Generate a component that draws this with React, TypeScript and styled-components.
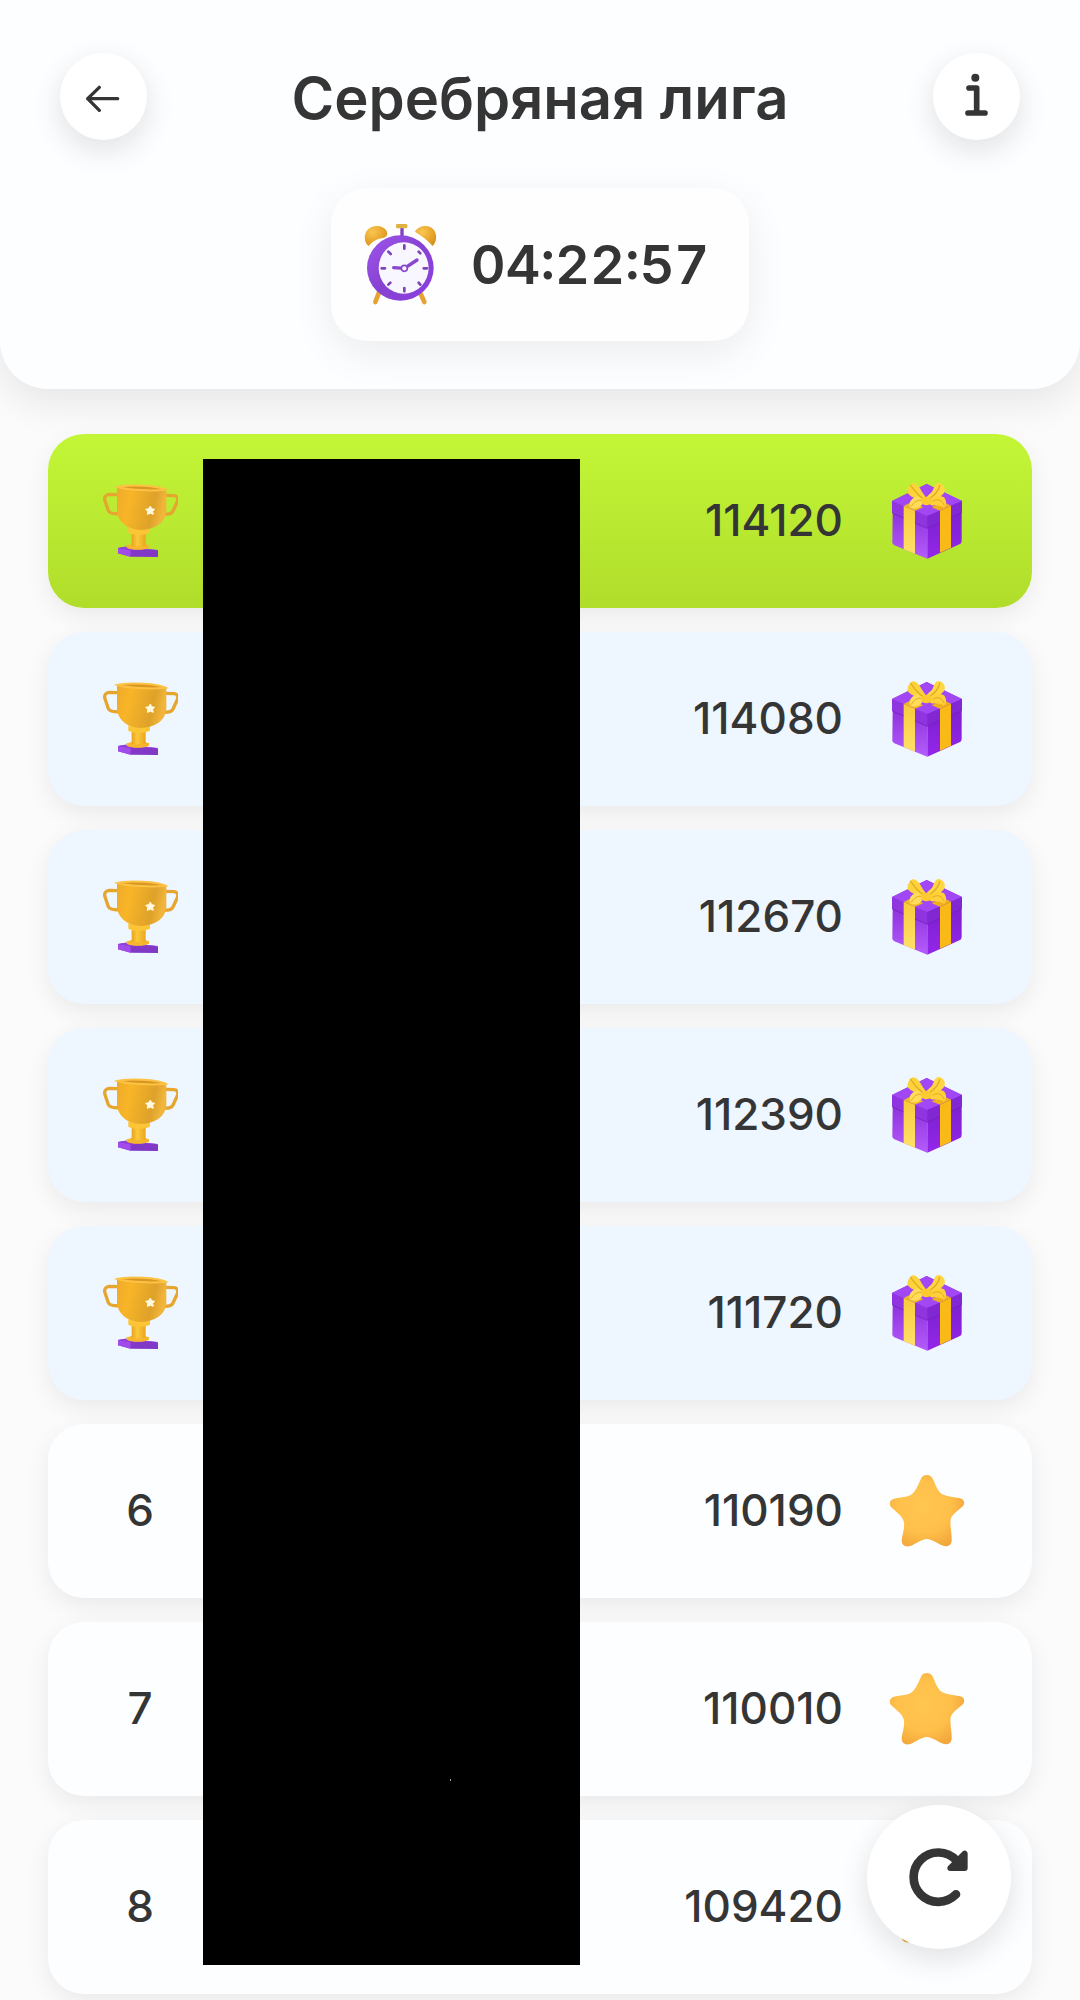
import styled, { createGlobalStyle } from "styled-components";

type Player = {
  place: number;
  score: number;
  current?: boolean;
};

const players: Player[] = [
  { place: 1, score: 114120, current: true },
  { place: 2, score: 114080 },
  { place: 3, score: 112670 },
  { place: 4, score: 112390 },
  { place: 5, score: 111720 },
  { place: 6, score: 110190 },
  { place: 7, score: 110010 },
  { place: 8, score: 109420 },
];

// first five places get a cup and a gift
const PRIZE_PLACES = 5;

const ArrowIcon = () => (
  <svg viewBox="60 68 261 261" aria-hidden="true">
    <path
      d="M178 171L143 205L178 240M143 205H233"
      fill="none"
      stroke="#353535"
      strokeWidth="10"
      strokeLinecap="round"
      strokeLinejoin="round"
    />
  </svg>
);

const InfoIcon = () => (
  <svg viewBox="69 68 261 261" aria-hidden="true">
    <circle cx="196" cy="142" r="12" fill="#353535" />
    <path
      d="M177 173H200V247M174 248H225"
      fill="none"
      stroke="#353535"
      strokeWidth="17"
      strokeLinecap="round"
      strokeLinejoin="round"
    />
  </svg>
);

const RefreshIcon = () => (
  <svg viewBox="621 75 432 432" aria-hidden="true">
    <path
      d="M888 343A74 74 0 1 1 889 241"
      fill="none"
      stroke="#353535"
      strokeWidth="26"
      strokeLinecap="round"
    />
    <path
      d="M914 221V264H871Z"
      fill="#353535"
      stroke="#353535"
      strokeWidth="18"
      strokeLinejoin="round"
    />
  </svg>
);

const ClockIcon = () => (
  <svg width="76" height="88" viewBox="36 66 228 264" aria-hidden="true">
    <defs>
      <linearGradient id="clockBody" x1="0" y1="0" x2="1" y2="1">
        <stop offset="0" stopColor="#9d55ea" />
        <stop offset="0.5" stopColor="#8742d2" />
        <stop offset="1" stopColor="#8b3fe0" />
      </linearGradient>
      <radialGradient id="clockBell" cx="0.35" cy="0.3" r="0.8">
        <stop offset="0" stopColor="#f9c750" />
        <stop offset="0.6" stopColor="#e9a52d" />
        <stop offset="1" stopColor="#d18f1f" />
      </radialGradient>
    </defs>
    <path d="M84 280L73 309M207 280L220 309" stroke="#e8a232" strokeWidth="14" strokeLinecap="round" />
    <path d="M148 84H158V112H148Z" fill="#8340c4" />
    <rect x="135" y="75" width="34" height="13" rx="4" fill="#dfb341" />
    <path d="M53 141C39 131 36 105 52 90C68 76 97 79 107 96C112 108 106 116 92 118C74 121 63 130 53 141Z" fill="url(#clockBell)" />
    <path d="M192 98C203 80 231 75 247 91C260 106 257 130 245 141C233 126 214 112 192 98Z" fill="url(#clockBell)" />
    <ellipse cx="148" cy="207" rx="100" ry="98" fill="url(#clockBody)" />
    <ellipse cx="158" cy="207" rx="75" ry="77" fill="#f8f6fe" />
    <path
      d="M160 139V149M160 267V277M92 208H102M218 208H228M112 158L119 165M203 158L208 163M112 257L118 251M203 251L208 257"
      stroke="#7b45b5"
      strokeWidth="8"
      strokeLinecap="round"
      strokeLinejoin="round"
      fill="none"
    />
    <path d="M160 208L128 206M160 208L198 183" stroke="#8748ce" strokeWidth="10" strokeLinecap="round" />
    <circle cx="160" cy="208" r="9" fill="#f8f6fe" stroke="#8748ce" strokeWidth="5" />
  </svg>
);

const CupIcon = () => (
  <svg width="76" height="80" viewBox="36 30 228 240" role="img" aria-label="Кубок">
    <defs>
      <linearGradient id="cupBowl" x1="0" y1="0" x2="1" y2="0.2">
        <stop offset="0" stopColor="#eda92b" />
        <stop offset="0.3" stopColor="#f8b527" />
        <stop offset="0.8" stopColor="#dea22a" />
        <stop offset="1" stopColor="#f1b53b" />
      </linearGradient>
      <linearGradient id="cupStem" x1="0" y1="0" x2="1" y2="0">
        <stop offset="0" stopColor="#e9a21e" />
        <stop offset="0.4" stopColor="#fbc93c" />
        <stop offset="1" stopColor="#eba51e" />
      </linearGradient>
    </defs>
    <path
      d="M86 74L57 73C46 74 42 83 45 92L55 122C59 131 70 132 86 131M226 76L252 77C262 78 266 86 262 95L248 125C243 133 235 133 222 133"
      fill="none"
      stroke="#e6a52e"
      strokeWidth="10"
      strokeLinecap="round"
    />
    <path d="M84 234L106 230L204 241V261L122 260L84 250Z" fill="#8238c6" />
    <path d="M84 234L122 241V260L84 250Z" fill="#a04bea" />
    <path d="M84 234L106 230L204 240L122 241Z" fill="#9140d8" />
    <ellipse cx="144" cy="229" rx="33" ry="9" fill="#f5b82e" />
    <path d="M125 188H167V228H125Z" fill="url(#cupStem)" />
    <path d="M110 224C126 232 162 232 177 224V233C160 242 126 241 110 233Z" fill="#f5b52c" />
    <path d="M115 172H180V188C160 197 132 197 115 188Z" fill="#fbc536" />
    <path d="M81 51C111 40 212 46 229 61V125C224 160 194 178 153 180C110 178 85 155 81 125Z" fill="url(#cupBowl)" />
    <path d="M82 51C112 42 205 47 227 59C190 64 110 60 82 51Z" fill="#d99722" stroke="#fcc244" strokeWidth="6" />
    <path
      d="M181 108L185 116L194 118L188 124L190 133L181 130L172 133L173 124L167 118L176 116Z"
      fill="#fff9df"
      stroke="#fff9df"
      strokeWidth="3"
      strokeLinejoin="round"
    />
  </svg>
);

const GiftIcon = () => (
  <svg width="76" height="80" viewBox="57 30 228 240" role="img" aria-label="Подарок">
    <defs>
      <linearGradient id="giftLeft" x1="0" y1="0" x2="0" y2="1">
        <stop offset="0" stopColor="#8e32dd" />
        <stop offset="1" stopColor="#b45cfb" />
      </linearGradient>
      <linearGradient id="giftRight" x1="0" y1="0" x2="0" y2="1">
        <stop offset="0" stopColor="#7d20cf" />
        <stop offset="1" stopColor="#9326ea" />
      </linearGradient>
      <linearGradient id="giftRibbon" x1="0" y1="0" x2="0" y2="1">
        <stop offset="0" stopColor="#f9cb3a" />
        <stop offset="1" stopColor="#ffe06a" />
      </linearGradient>
    </defs>
    <path d="M68 126L172 168V266L73 226Q67 223 67 217Z" fill="url(#giftLeft)" />
    <path d="M172 168L275 124V212Q275 219 270 222L172 266Z" fill="url(#giftRight)" />
    <path d="M66 93L170 42L276 93V127L172 174L66 128Z" fill="#8f34df" />
    <path d="M66 93L170 42L276 93L172 138Z" fill="#a247f4" />
    <path d="M172 138L276 93V127L172 174Z" fill="#8227d4" />
    <path d="M67 129L172 175L275 128" fill="none" stroke="#6c1bb6" strokeWidth="2" />
    <path d="M101 108L135 122V251L101 238Z" fill="url(#giftRibbon)" />
    <path d="M210 122L243 107V233L210 248Z" fill="#f9b916" />
    <path d="M101 108L125 96L160 112L135 122Z" fill="#f2b823" />
    <path d="M185 112L220 96L243 107L210 122Z" fill="#efb01c" />
    <path d="M163 93C148 92 131 84 122 78L113 70C111 60 116 45 128 40C143 39 150 56 157 67C163 77 172 84 170 95Z" fill="#fdd33c" />
    <path d="M167 94C164 82 177 75 186 65C193 56 192 40 207 39C222 42 229 57 222 69C213 82 190 92 167 94Z" fill="#ffd744" />
    <path d="M122 46C133 60 139 74 163 88M209 46C208 64 190 78 175 90" fill="none" stroke="#e2ab22" strokeWidth="4" strokeLinecap="round" />
    <path d="M162 92C158 107 143 120 122 114C113 104 121 85 142 79Z" fill="#ffdc5a" />
    <path d="M177 90C190 76 209 73 222 82C230 92 231 106 222 113C207 101 193 110 180 104Z" fill="#ffd03a" />
    <path d="M124 109C132 95 142 89 153 91M189 93C205 84 216 91 222 105" fill="none" stroke="#e2ab22" strokeWidth="3" strokeLinecap="round" />
    <ellipse cx="169" cy="93" rx="16" ry="13" fill="#fcc930" />
  </svg>
);

const StarIcon = () => (
  <svg width="76" height="80" viewBox="57 30 228 240" role="img" aria-label="Звезда">
    <defs>
      <radialGradient id="starFill" cx="0.45" cy="0.45" r="0.6">
        <stop offset="0" stopColor="#ffc650" />
        <stop offset="0.6" stopColor="#ffc04a" />
        <stop offset="1" stopColor="#f2a63c" />
      </radialGradient>
    </defs>
    <path
      d="M154 54C160 42 181 42 187 54C196 72 202 93 217 103C233 110 252 111 271 115C284 119 286 132 277 140C263 153 246 163 242 178C239 196 246 222 245 242C244 258 229 262 216 256C199 249 185 237 170 237C155 238 137 252 121 258C105 263 94 254 95 240C97 222 106 201 101 183C95 166 78 156 64 142C55 132 60 119 72 116C91 111 113 113 126 102C140 90 146 71 154 54Z"
      fill="url(#starFill)"
    />
  </svg>
);

const App = () => {
  return (
    <Page>
      <GlobalStyle />
      <Header>
        <TitleRow>
          <RoundButton type="button" aria-label="Назад" $size={87}>
            <ArrowIcon />
          </RoundButton>
          <Title>Серебряная лига</Title>
          <RoundButton type="button" aria-label="Информация" $size={87}>
            <InfoIcon />
          </RoundButton>
        </TitleRow>
        <Timer>
          <ClockIcon />
          <Time>04:22:57</Time>
        </Timer>
      </Header>

      <Board>
        <List>
          {players.map((player) => {
            const prize = player.place <= PRIZE_PLACES;
            return (
              <Row
                key={player.place}
                $tone={player.current ? "current" : prize ? "prize" : "plain"}
              >
                <Place>{prize ? <CupIcon /> : player.place}</Place>
                <Score>{player.score}</Score>
                {prize ? <GiftIcon /> : <StarIcon />}
              </Row>
            );
          })}
        </List>
        <NamesCover />
      </Board>

      <Refresh type="button" aria-label="Обновить" $size={144}>
        <RefreshIcon />
      </Refresh>
    </Page>
  );
};

const GlobalStyle = createGlobalStyle`
  * {
    box-sizing: border-box;
  }

  body {
    margin: 0;
    background: #fbfbfb;
    color: #353535;
    font-family: Inter, "Noto Sans", sans-serif;
  }
`;

const Page = styled.div`
  min-height: 100vh;
`;

const Header = styled.header`
  display: flex;
  flex-direction: column;
  align-items: center;
  gap: 48px;
  padding: 53px 60px 48px;
  background: #fdfeff;
  border-radius: 0 0 48px 48px;
  box-shadow: 0 12px 40px rgba(0, 0, 0, 0.09);
`;

const TitleRow = styled.div`
  display: flex;
  align-items: center;
  justify-content: space-between;
  width: 100%;
`;

const Title = styled.h1`
  margin: 0;
  padding-top: 2px;
  font-size: 58px;
  line-height: 72px;
  font-weight: 600;
`;

const RoundButton = styled.button<{ $size: number }>`
  flex-shrink: 0;
  width: ${({ $size }) => $size}px;
  height: ${({ $size }) => $size}px;
  padding: 0;
  border: 0;
  border-radius: 50%;
  background: #fff;
  box-shadow: 0 10px 30px rgba(20, 20, 30, 0.12);
  cursor: pointer;

  svg {
    display: block;
    width: 100%;
    height: 100%;
  }
`;

const Refresh = styled(RoundButton)`
  position: fixed;
  right: 69px;
  bottom: 51px;
`;

const Timer = styled.div`
  display: flex;
  align-items: center;
  gap: 32px;
  padding: 33px 40px 32px 32px;
  border-radius: 36px;
  background: #fefefe;
  box-shadow: 0 12px 40px rgba(20, 20, 40, 0.08);
`;

const Time = styled.time`
  font-size: 54px;
  line-height: 64px;
  font-weight: 600;
  font-variant-numeric: tabular-nums;
`;

const Board = styled.main`
  position: relative;
  margin: 45px 48px 6px;
`;

const List = styled.ol`
  display: flex;
  flex-direction: column;
  gap: 24px;
  margin: 0;
  padding: 0;
  list-style: none;
`;

const tones = {
  current: "linear-gradient(#c3f637, #b0dd2b)",
  prize: "#eef6ff",
  plain: "#fdfeff",
};

const Row = styled.li<{ $tone: keyof typeof tones }>`
  display: flex;
  align-items: center;
  gap: 46px;
  height: 174px;
  padding: 0 67px 2px 54px;
  border-radius: 36px;
  background: ${({ $tone }) => tones[$tone]};
  box-shadow: 0 8px 24px rgba(0, 0, 0, 0.07);
`;

const Place = styled.span`
  display: flex;
  justify-content: center;
  width: 76px;
  font-size: 44px;
  font-weight: 500;
`;

const Score = styled.span`
  margin-left: auto;
  font-size: 44px;
  font-weight: 500;
`;

const NamesCover = styled.div`
  position: absolute;
  top: 25px;
  bottom: 29px;
  left: 155px;
  width: 377px;
  background: #000;

  &::after {
    content: "";
    position: absolute;
    right: 129px;
    bottom: 184px;
    width: 1px;
    height: 2px;
    background: #aaa;
  }
`;

export default App;
